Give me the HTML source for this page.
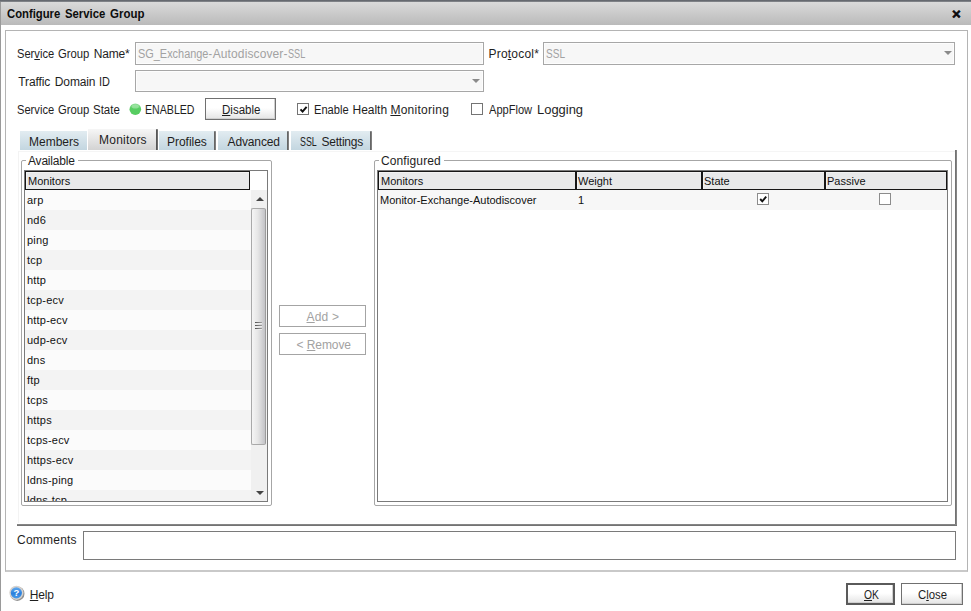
<!DOCTYPE html>
<html>
<head>
<meta charset="utf-8">
<title>Configure Service Group</title>
<style>
html,body{margin:0;padding:0;}
body{width:971px;height:611px;position:relative;overflow:hidden;background:#fff;
 font-family:"Liberation Sans",sans-serif;font-size:12px;color:#1e1e1e;}
.abs{position:absolute;}
.t{position:absolute;white-space:nowrap;line-height:14px;height:14px;transform-origin:0 50%;}
u{text-decoration:underline;}
#topline{left:0;top:0;width:971px;height:2px;background:linear-gradient(#5a5e65,#8a8d91);}
#leftline{left:0;top:2px;width:1px;height:609px;background:#9a9a9a;}
#titlebar{left:1px;top:2px;width:970px;height:23px;background:linear-gradient(#dadada,#bababa);}
#panel{left:5px;top:30px;width:963px;height:542px;border:1px solid #b4b4b4;border-bottom:2px solid #c9c9c9;box-sizing:border-box;}
.inp{position:absolute;box-sizing:border-box;border:1px solid #a7a7a7;background:#f7f7f7;box-shadow:inset 0 0 0 1px #fdfdfd;}
.gray{color:#a2a2a2;}
.btn{position:absolute;box-sizing:border-box;border:1px solid #707070;background:linear-gradient(#ffffff 45%,#e4e4e4);box-shadow:inset -1px -1px 0 #cfcfcf;}
.btnd{position:absolute;box-sizing:border-box;border:1px solid #a4a4a4;background:#fff;}
.tab{position:absolute;box-sizing:border-box;top:131px;height:19px;background:linear-gradient(#e2ecf1,#c3d6e0);}
.tabr{position:absolute;top:131px;height:19px;width:2px;background:linear-gradient(90deg,#5a5a5a,#8a8a8a);border-radius:1px 1px 0 0;}
.cb{position:absolute;box-sizing:border-box;width:12px;height:12px;border:1px solid #747474;background:#fff;}
.cb2{position:absolute;box-sizing:border-box;width:12px;height:12px;border:1px solid #8c8c8c;background:#fff;}
.fs{position:absolute;box-sizing:border-box;border:1px solid #a6a6a6;border-radius:2px;}
.lb{position:absolute;box-sizing:border-box;border:1px solid #7a7a7a;background:#fff;overflow:hidden;}
.row{position:absolute;left:0;width:226px;height:20px;}
.hdr{position:absolute;box-sizing:border-box;border:1px solid #161616;background:#e8e9ea;box-shadow:inset 1px 1px 0 #f2f2f2;}
.ht{position:absolute;left:1px;top:3px;font-size:11px;line-height:13px;color:#111;white-space:nowrap;}
.rt{position:absolute;left:2px;top:4px;font-size:11px;line-height:13px;color:#111;white-space:nowrap;}
#availbox .rt{letter-spacing:0.2px;}
.tri{position:absolute;width:0;height:0;border-left:4px solid transparent;border-right:4px solid transparent;}
</style>
</head>
<body>
<div class="abs" id="topline"></div>
<div class="abs" id="titlebar"></div>
<div class="abs" id="leftline"></div>
<div class="t" id="title_0" style="left:6.6px;top:7px;transform:scaleX(0.9404);font-weight:bold;color:#0c0c0c;">Configure</div><div class="t" id="title_1" style="left:64.5px;top:7px;transform:scaleX(0.9442);font-weight:bold;color:#0c0c0c;">Service</div><div class="t" id="title_2" style="left:110.3px;top:7px;transform:scaleX(0.9556);font-weight:bold;color:#0c0c0c;">Group</div>
<div class="t" id="closex" style="left:952px;top:7px;font-weight:bold;font-size:15px;color:#0a0a0a;-webkit-text-stroke:0.6px #0a0a0a;">×</div>
<div class="abs" id="panel"></div>

<!-- row 1 -->
<div class="t" id="l_sgn_0" style="left:16.5px;top:47px;transform:scaleX(0.9282);">Ser<u>v</u>ice</div><div class="t" id="l_sgn_1" style="left:57.8px;top:47px;transform:scaleX(0.9396);">Group</div><div class="t" id="l_sgn_2" style="left:93.8px;top:47px;letter-spacing:-0.2px;">Name*</div>
<div class="inp" style="left:135px;top:42px;width:349px;height:23px;"></div>
<div class="t gray" id="v_sgn_0" style="left:137.8px;top:47px;transform:scaleX(0.9101);">SG_Exchange-</div><div class="t gray" id="v_sgn_1" style="left:212.7px;top:47px;letter-spacing:0.117px;">Autodiscover-</div><div class="t gray" id="v_sgn_2" style="left:287.6px;top:47px;transform:scaleX(0.7619);">SSL</div>
<div class="t" id="l_proto" style="left:488.5px;top:47px;letter-spacing:0.2px;">Pro<u>t</u>ocol*</div>
<div class="inp" style="left:543px;top:42px;width:412px;height:23px;"></div>
<div class="t gray" id="v_ssl" style="left:545.5px;top:47px;transform:scaleX(0.8391);">SSL</div>
<div class="tri" style="left:944px;top:51px;border-top:4px solid #8a8a8a;"></div>

<!-- row 2 -->
<div class="t" id="l_td_0" style="left:18.3px;top:75px;letter-spacing:-0.1px;">Traffic</div><div class="t" id="l_td_1" style="left:54.8px;top:75px;letter-spacing:-0.12px;">Domain</div><div class="t" id="l_td_2" style="left:99.1px;top:75px;transform:scaleX(0.9091);">ID</div>
<div class="inp" style="left:135px;top:70px;width:349px;height:22px;"></div>
<div class="tri" style="left:472px;top:79px;border-top:4px solid #8a8a8a;"></div>

<!-- row 3 -->
<div class="t" id="l_sgs_0" style="left:16.5px;top:103px;transform:scaleX(0.9282);">Service</div><div class="t" id="l_sgs_1" style="left:57.8px;top:103px;transform:scaleX(0.9396);">Group</div><div class="t" id="l_sgs_2" style="left:92.7px;top:103px;transform:scaleX(0.9558);">State</div>
<svg class="abs" style="left:128px;top:102px;" width="15" height="15" viewBox="0 0 15 15"><defs><linearGradient id="gd" x1="0" y1="0" x2="0" y2="1"><stop offset="0" stop-color="#8fdf96"/><stop offset="0.45" stop-color="#57cd62"/><stop offset="1" stop-color="#56cc60"/></linearGradient></defs><circle cx="7.3" cy="7.2" r="5.8" fill="url(#gd)"/><ellipse cx="7.3" cy="4.6" rx="3.6" ry="2" fill="#b4ecb8" opacity="0.55"/></svg>
<div class="t" id="l_en" style="left:144.5px;top:103px;transform:scaleX(0.8837);">ENABLED</div>
<div class="btn" style="left:205px;top:98px;width:71px;height:22px;"></div>
<div class="t" id="b_dis" style="left:222.2px;top:103px;transform:scaleX(0.9625);"><u>D</u>isable</div>
<div class="cb" style="left:297px;top:103px;"><svg width="10" height="10" viewBox="0 0 10 10" style="position:absolute;left:0;top:0;"><path d="M2.5 5.3 L4.6 7.6 L8.6 2.9" fill="none" stroke="#111" stroke-width="2"/></svg></div>
<div class="t" id="l_ehm_0" style="left:313.5px;top:103px;transform:scaleX(0.9278);">Enable</div><div class="t" id="l_ehm_1" style="left:352.6px;top:103px;letter-spacing:-0.04px;">Health</div><div class="t" id="l_ehm_2" style="left:390.4px;top:103px;letter-spacing:0.267px;"><u>M</u>onitoring</div>
<div class="cb" style="left:471px;top:103px;"></div>
<div class="t" id="l_afl_0" style="left:489.1px;top:103px;transform:scaleX(0.9234);">AppFlow</div><div class="t" id="l_afl_1" style="left:537.1px;top:103px;transform:scaleX(1.078);">Logging</div>

<!-- tabs -->
<div class="tab" style="left:20px;width:67px;"></div>
<div class="tab" style="left:88px;width:70px;top:129px;height:21px;background:linear-gradient(#f6f6f6,#d3d3d3);"></div>
<div class="tabr" style="left:156px;top:129px;height:21px;background:linear-gradient(90deg,#4a4a4a,#7a7a7a);"></div>
<div class="tab" style="left:159px;width:57px;"></div><div class="tabr" style="left:214px;"></div>
<div class="tab" style="left:218px;width:71px;"></div><div class="tabr" style="left:287px;"></div>
<div class="tab" style="left:291px;width:81px;"></div><div class="tabr" style="left:370px;"></div>
<div class="t" id="tab1" style="left:29.0px;top:135px;">Members</div>
<div class="t" id="tab2" style="left:99.0px;top:133px;letter-spacing:0.228px;">Monitors</div>
<div class="t" id="tab3" style="left:167.0px;top:135px;letter-spacing:-0.028px;">Profiles</div>
<div class="t" id="tab4" style="left:227.6px;top:135px;letter-spacing:-0.143px;">Advanced</div>
<div class="t" id="tab5_0" style="left:300.2px;top:135px;transform:scaleX(0.7384);">SSL</div><div class="t" id="tab5_1" style="left:321.5px;top:135px;letter-spacing:-0.228px;">Settings</div>

<!-- tab content frame -->
<div class="abs" style="left:18px;top:151px;width:937px;height:1px;background:#f5f5f5;"></div>
<div class="abs" style="left:18px;top:151px;width:1px;height:372px;background:#f3f3f3;"></div>
<div class="abs" style="left:955px;top:150px;width:2px;height:376px;background:linear-gradient(90deg,#6a6a6a,#8e8e8e);"></div>
<div class="abs" style="left:17px;top:524px;width:940px;height:2px;background:linear-gradient(#8e8e8e,#6a6a6a);"></div>

<!-- Available -->
<div class="fs" style="left:21px;top:160px;width:251px;height:346px;"></div>
<div class="t" id="fs1" style="left:28.0px;top:154px;letter-spacing:-0.198px;background:#fff;padding:0 3px 0 2px;margin-left:-2px;">Available</div>
<div class="lb" style="left:24px;top:170px;width:244px;height:332px;" id="availbox">
<div class="hdr" style="left:0;top:0;width:225px;height:19px;"><span class="ht" style="left:2px;">Monitors</span></div>
<div class="row" style="top:19px;background:#fbfbfb;"><span class="rt">arp</span></div>
<div class="row" style="top:39px;background:#f3f3f3;"><span class="rt">nd6</span></div>
<div class="row" style="top:59px;background:#fbfbfb;"><span class="rt">ping</span></div>
<div class="row" style="top:79px;background:#f3f3f3;"><span class="rt">tcp</span></div>
<div class="row" style="top:99px;background:#fbfbfb;"><span class="rt">http</span></div>
<div class="row" style="top:119px;background:#f3f3f3;"><span class="rt">tcp-ecv</span></div>
<div class="row" style="top:139px;background:#fbfbfb;"><span class="rt">http-ecv</span></div>
<div class="row" style="top:159px;background:#f3f3f3;"><span class="rt">udp-ecv</span></div>
<div class="row" style="top:179px;background:#fbfbfb;"><span class="rt">dns</span></div>
<div class="row" style="top:199px;background:#f3f3f3;"><span class="rt">ftp</span></div>
<div class="row" style="top:219px;background:#fbfbfb;"><span class="rt">tcps</span></div>
<div class="row" style="top:239px;background:#f3f3f3;"><span class="rt">https</span></div>
<div class="row" style="top:259px;background:#fbfbfb;"><span class="rt">tcps-ecv</span></div>
<div class="row" style="top:279px;background:#f3f3f3;"><span class="rt">https-ecv</span></div>
<div class="row" style="top:299px;background:#fbfbfb;"><span class="rt">ldns-ping</span></div>
<div class="row" style="top:319px;background:#f3f3f3;"><span class="rt">ldns-tcp</span></div>
<div class="abs" id="sbtrack" style="left:226px;top:19px;width:16px;height:311px;background:#f0f0f0;"></div>
<div class="abs" id="sbthumb" style="left:226px;top:37px;width:15px;height:237px;box-sizing:border-box;border:1px solid #a9a9a9;border-right-color:#9c9c9c;border-radius:2px;background:linear-gradient(90deg,#f5f5f5,#e6e6e6 45%,#c3c3c7);"></div>
<div class="abs" style="left:230px;top:151px;width:7px;height:1px;background:linear-gradient(90deg,#505050,#a0a0a0);box-shadow:0 1px 0 #ececec;"></div>
<div class="abs" style="left:230px;top:154px;width:7px;height:1px;background:linear-gradient(90deg,#505050,#a0a0a0);box-shadow:0 1px 0 #ececec;"></div>
<div class="abs" style="left:230px;top:157px;width:7px;height:1px;background:linear-gradient(90deg,#505050,#a0a0a0);box-shadow:0 1px 0 #ececec;"></div>
<div class="tri" style="left:231px;top:26px;border-bottom:4px solid #444;"></div>
<div class="tri" style="left:231px;top:320px;border-top:4px solid #444;"></div>
</div>

<!-- Configured -->
<div class="fs" style="left:374px;top:160px;width:578px;height:346px;"></div>
<div class="t" id="fs2" style="left:381.0px;top:154px;letter-spacing:0.111px;background:#fff;padding:0 3px 0 2px;margin-left:-2px;">Configured</div>
<div class="lb" style="left:377px;top:170px;width:571px;height:332px;" id="confbox">
<div class="hdr" style="left:0;top:0;width:198px;height:19px;"><span class="ht" style="left:2px;">Monitors</span></div>
<div class="hdr" style="left:198px;top:0;width:126px;height:19px;"><span class="ht">Weight</span></div>
<div class="hdr" style="left:324px;top:0;width:123px;height:19px;"><span class="ht">State</span></div>
<div class="hdr" style="left:447px;top:0;width:122px;height:19px;"><span class="ht">Passive</span></div>
<div class="row" style="left:0;width:569px;top:19px;background:#f7f7f7;"><span class="rt" style="left:2px;">Monitor-Exchange-Autodiscover</span><span class="rt" style="left:200px;">1</span></div>
<div class="cb2" style="left:379px;top:22px;"><svg width="10" height="10" viewBox="0 0 10 10" style="position:absolute;left:0;top:0;"><path d="M2.2 5 L4.3 7.3 L8.2 2.6" fill="none" stroke="#111" stroke-width="1.9"/></svg></div>
<div class="cb2" style="left:501px;top:22px;"></div>
</div>

<!-- buttons -->
<div class="btnd" style="left:279px;top:305px;width:87px;height:22px;"></div>
<div class="t gray" id="b_add" style="left:306.5px;top:310px;letter-spacing:0.2px;"><u>A</u>dd &gt;</div>
<div class="btnd" style="left:279px;top:333px;width:87px;height:22px;"></div>
<div class="t gray" id="b_rem" style="left:296.6px;top:338px;letter-spacing:-0.087px;">&lt; <u>R</u>emove</div>

<!-- comments -->
<div class="t" id="l_com" style="left:17.0px;top:533px;letter-spacing:0.228px;">Comments</div>
<div class="abs" style="left:83px;top:531px;width:873px;height:29px;box-sizing:border-box;border:1px solid #7a7a7a;background:#fff;"></div>

<!-- footer -->
<svg class="abs" id="helpicon" style="left:8px;top:584px;" width="18" height="18" viewBox="0 0 18 18"><defs><linearGradient id="hb" x1="0" y1="0" x2="0" y2="1"><stop offset="0" stop-color="#62aaf0"/><stop offset="0.55" stop-color="#2b80dc"/><stop offset="1" stop-color="#4a9cea"/></linearGradient></defs><circle cx="9.3" cy="9.7" r="7.2" fill="#757575" opacity="0.8"/><circle cx="8.4" cy="8.8" r="7.1" fill="#d6d2ce"/><circle cx="8.35" cy="8.85" r="5.6" fill="url(#hb)"/><text x="8.4" y="12.2" text-anchor="middle" font-family="Liberation Sans, sans-serif" font-weight="bold" font-size="9.5" fill="#ffffff">?</text></svg>
<div class="t" id="l_help" style="left:29.8px;top:588px;letter-spacing:-0.201px;"><u>H</u>elp</div>
<div class="btn" style="left:846px;top:583px;width:49px;height:22px;border:2px solid #5a5a5a;"></div>
<div class="t" id="b_ok" style="left:863.7px;top:588px;transform:scaleX(0.8591);"><u>O</u>K</div>
<div class="btn" style="left:901px;top:583px;width:62px;height:22px;"></div>
<div class="t" id="b_close" style="left:918.0px;top:588px;transform:scaleX(0.9493);">C<u>l</u>ose</div>
</body>
</html>
